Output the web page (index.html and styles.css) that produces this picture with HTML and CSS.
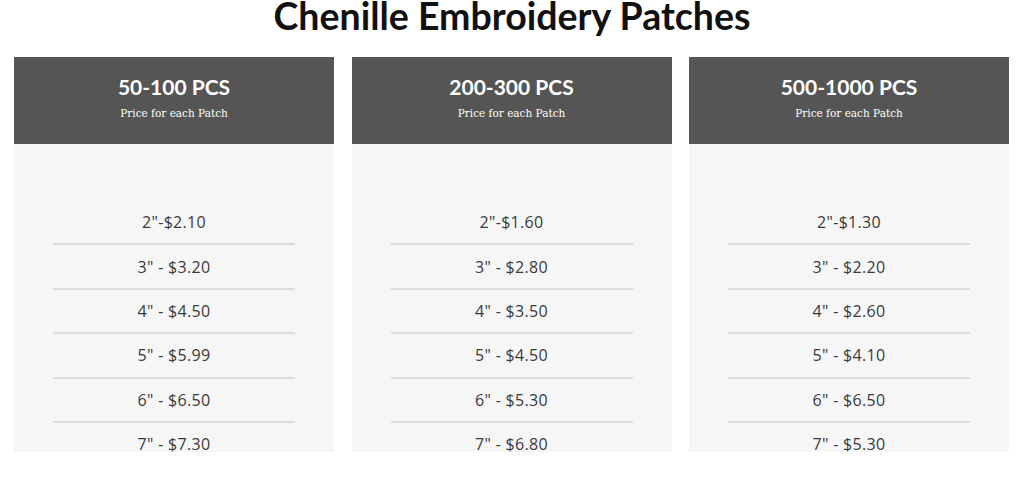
FILE: index.html
```html
<!DOCTYPE html>
<html>
<head>
<meta charset="utf-8">
<link rel="stylesheet" href="styles.css">
</head>
<body>
<h1 class="title">Chenille Embroidery Patches</h1>
<div class="cards">
  <div class="card">
    <div class="card-head">
      <div class="qty">50-100 PCS</div>
      <div class="sub">Price for each Patch</div>
    </div>
    <div class="card-body">
      <div class="row">2"-$2.10</div>
      <div class="row">3" - $3.20</div>
      <div class="row">4" - $4.50</div>
      <div class="row">5" - $5.99</div>
      <div class="row">6" - $6.50</div>
      <div class="row">7" - $7.30</div>
    </div>
  </div>
  <div class="card">
    <div class="card-head">
      <div class="qty">200-300 PCS</div>
      <div class="sub">Price for each Patch</div>
    </div>
    <div class="card-body">
      <div class="row">2"-$1.60</div>
      <div class="row">3" - $2.80</div>
      <div class="row">4" - $3.50</div>
      <div class="row">5" - $4.50</div>
      <div class="row">6" - $5.30</div>
      <div class="row">7" - $6.80</div>
    </div>
  </div>
  <div class="card">
    <div class="card-head">
      <div class="qty">500-1000 PCS</div>
      <div class="sub">Price for each Patch</div>
    </div>
    <div class="card-body">
      <div class="row">2"-$1.30</div>
      <div class="row">3" - $2.20</div>
      <div class="row">4" - $2.60</div>
      <div class="row">5" - $4.10</div>
      <div class="row">6" - $6.50</div>
      <div class="row">7" - $5.30</div>
    </div>
  </div>
</div>
</body>
</html>
```

FILE: styles.css
```css
html, body {
  margin: 0;
  padding: 0;
  background: #fff;
}
body {
  width: 1024px;
  height: 477px;
  overflow: hidden;
}
.title {
  margin: 0;
  height: 57px;
  font-family: Lato, "Liberation Sans", sans-serif;
  font-weight: 700;
  font-size: 37.5px;
  line-height: 31px;
  color: #111;
  text-align: center;
}
.cards {
  display: flex;
  gap: 17.5px;
  padding-left: 14px;
}
.card {
  width: 320px;
  flex: none;
}
.card-head {
  background: #555555;
  height: 87px;
  box-sizing: border-box;
  padding-top: 18px;
  text-align: center;
  color: #fff;
}
.qty {
  font-family: Lato, "Liberation Sans", sans-serif;
  font-weight: 700;
  font-size: 21px;
  line-height: 24px;
}
.sub {
  font-family: "DejaVu Serif", "Liberation Serif", serif;
  font-size: 10.5px;
  line-height: 14px;
  margin-top: 7px;
}
.card-body {
  background: #f6f6f6;
  height: 308px;
  overflow: hidden;
  box-sizing: border-box;
  padding: 57px 39px 0;
}
.row {
  height: 44.4px;
  box-sizing: border-box;
  border-bottom: 2px solid #dcdcdc;
  display: flex;
  align-items: center;
  justify-content: center;
  font-family: "Open Sans", "Noto Sans", sans-serif;
  font-size: 16px;
  color: #3a3a3a;
  letter-spacing: 0.3px;
}
```
